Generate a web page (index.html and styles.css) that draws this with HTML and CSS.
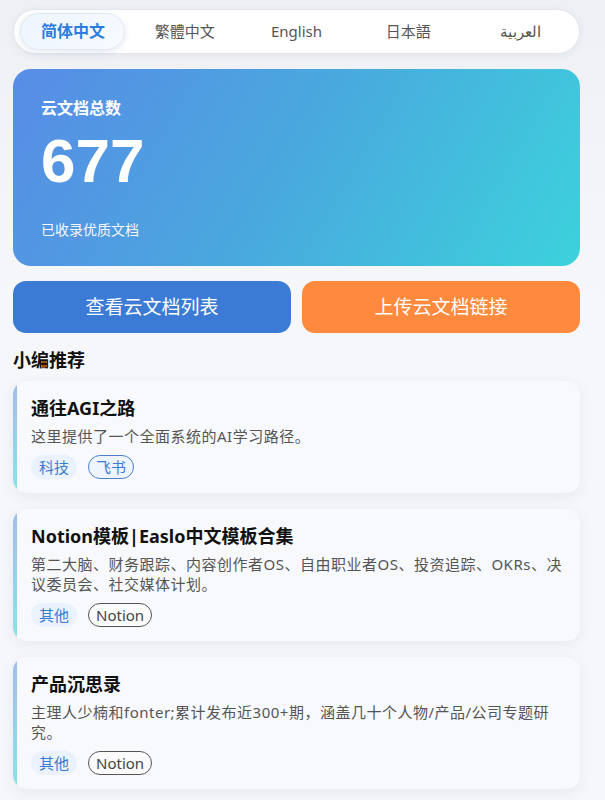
FILE: index.html
```html
<!doctype html>
<html>
<head>
    <meta charset="utf-8">
    <title>云文档</title>
    <link rel="stylesheet" href="styles.css">
</head>
<body>
<div id="page">
    <div class="langBar">
        <div class="lang"><span class="langLabel active">简体中文</span></div>
        <div class="lang"><span class="langLabel">繁體中文</span></div>
        <div class="lang"><span class="langLabel">English</span></div>
        <div class="lang"><span class="langLabel">日本語</span></div>
        <div class="lang"><span class="langLabel">العربية</span></div>
    </div>

    <div class="statCard">
        <div class="statTitle">云文档总数</div>
        <div class="statNumber">677</div>
        <div class="statSub">已收录优质文档</div>
    </div>

    <div class="actions">
        <div class="btn btnBlue">查看云文档列表</div>
        <div class="btn btnOrange">上传云文档链接</div>
    </div>

    <h3 class="sectionTitle">小编推荐</h3>

    <div class="docCard">
        <div class="docTitle">通往AGI之路</div>
        <div class="docDesc">这里提供了一个全面系统的AI学习路径。</div>
        <div class="tags">
            <span class="tag tagCat">科技</span>
            <span class="tag tagFeishu">飞书</span>
        </div>
    </div>

    <div class="docCard">
        <div class="docTitle">Notion模板|Easlo中文模板合集</div>
        <div class="docDesc">第二大脑、财务跟踪、内容创作者OS、自由职业者OS、投资追踪、OKRs、决议委员会、社交媒体计划。</div>
        <div class="tags">
            <span class="tag tagCat">其他</span>
            <span class="tag tagNotion">Notion</span>
        </div>
    </div>

    <div class="docCard">
        <div class="docTitle">产品沉思录</div>
        <div class="docDesc">主理人少楠和fonter;累计发布近300+期，涵盖几十个人物/产品/公司专题研究。</div>
        <div class="tags">
            <span class="tag tagCat">其他</span>
            <span class="tag tagNotion">Notion</span>
        </div>
    </div>
</div>
</body>
</html>
```

FILE: styles.css
```css
html {
    background: linear-gradient(180deg, #eef0f4 0px, #f5f7fb 300px, #f5f7fb 100%);
    min-height: 100%;
}

body {
    margin: 0;
    color: #111;
    font-family: "Noto Sans", "Noto Sans CJK SC", sans-serif;
}

#page {
    padding: 9px 25px 20px 13px;
}

.langBar {
    display: flex;
    height: 45px;
    padding: 0 3px;
    box-sizing: border-box;
    align-items: center;
    background: #fff;
    border: 1px solid #e3e6ec;
    border-radius: 23px;
    box-shadow: 0 2px 8px rgba(40, 50, 80, 0.06);
}

.lang {
    flex: 1;
    text-align: center;
}

.langLabel {
    display: inline-block;
    height: 37px;
    line-height: 37px;
    font-size: 15px;
    color: #555;
}

.langLabel.active {
    width: 105px;
    box-sizing: border-box;
    line-height: 35px;
    color: #2b7ddf;
    font-weight: bold;
    font-size: 16px;
    background: linear-gradient(135deg, #edf5ff, #f8fbff);
    border: 1px solid #e2e8f0;
    border-radius: 19px;
    box-shadow: 0 2px 6px rgba(40, 70, 120, 0.12);
}

.statCard {
    margin-top: 15px;
    padding: 28px 28px 26px;
    border-radius: 18px;
    color: #fff;
    background: linear-gradient(120deg, #588ce6 0%, #4aa6de 45%, #3cd2dc 100%);
}

.statTitle {
    font-size: 16px;
    font-weight: bold;
    line-height: 22px;
}

.statNumber {
    margin-top: 11px;
    font-family: "Liberation Sans", Arial, sans-serif;
    font-size: 62px;
    font-weight: bold;
    line-height: 62px;
}

.statSub {
    margin-top: 28px;
    font-size: 14px;
    line-height: 20px;
    opacity: 0.95;
}

.actions {
    display: flex;
    gap: 11px;
    margin-top: 15px;
}

.btn {
    flex: 1;
    height: 52px;
    line-height: 52px;
    text-align: center;
    color: #fff;
    font-size: 19px;
    border-radius: 13px;
}

.btnBlue {
    background: #3b7bd6;
}

.btnOrange {
    background: #ff8a3d;
}

.sectionTitle {
    margin: 14px 0 8px;
    font-size: 18px;
    line-height: 26px;
    font-weight: bold;
}

.docCard {
    position: relative;
    margin-bottom: 16px;
    padding: 15px 18px 14px 18px;
    background: #f8f9fd;
    border-radius: 14px;
    box-shadow: 0 4px 14px rgba(40, 50, 80, 0.07);
    overflow: hidden;
}

.docCard::before {
    content: "";
    position: absolute;
    left: 0;
    top: 0;
    bottom: 0;
    width: 4px;
    background: linear-gradient(180deg, #a2bdee, #8ee0ea);
}

.docTitle {
    font-size: 18px;
    font-weight: bold;
    line-height: 24px;
}

.docDesc {
    margin-top: 6px;
    font-size: 15px;
    line-height: 20px;
    letter-spacing: 0.5px;
    color: #555;
}

.tags {
    display: flex;
    gap: 11px;
    margin-top: 9px;
}

.tag {
    height: 24px;
    line-height: 22px;
    padding: 0 7px;
    box-sizing: border-box;
    font-size: 15px;
    border-radius: 12px;
    border: 1px solid transparent;
}

.tagCat {
    color: #3a7bd5;
    background: #eaf3fd;
}

.tagFeishu {
    color: #3a7bd5;
    background: #eef5fd;
    border-color: #4a80cf;
}

.tagNotion {
    color: #444;
    background: #fbfbfc;
    border-color: #555;
}
```
